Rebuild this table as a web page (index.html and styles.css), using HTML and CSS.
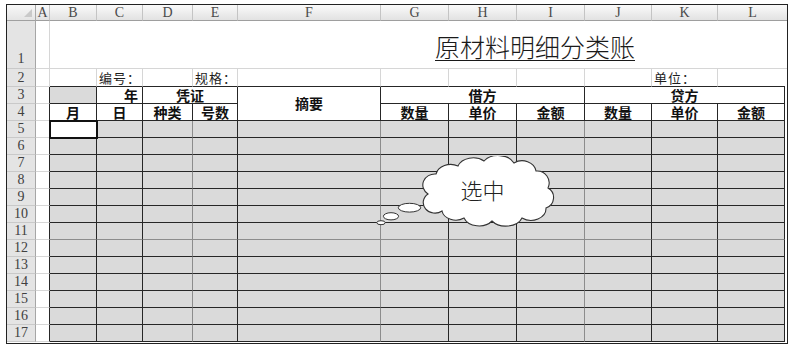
FILE: index.html
```html
<!DOCTYPE html>
<html lang="zh-CN">
<head>
<meta charset="utf-8">
<title>原材料明细分类账</title>
<link rel="stylesheet" href="styles.css">
</head>
<body>
<div class="sheet">
<table class="grid">
<colgroup>
<col class="w-rh"><col class="w-a"><col class="w-b"><col class="w-c"><col class="w-d"><col class="w-e"><col class="w-f"><col class="w-g"><col class="w-h"><col class="w-i"><col class="w-j"><col class="w-k"><col class="w-l"><col class="w-x">
</colgroup>
<tr class="r-head">
<th class="corner"><span class="tri"></span></th>
<th class="ch">A</th><th class="ch">B</th><th class="ch">C</th><th class="ch">D</th><th class="ch">E</th><th class="ch">F</th><th class="ch">G</th><th class="ch">H</th><th class="ch">I</th><th class="ch">J</th><th class="ch">K</th><th class="ch last" colspan="2">L</th>
</tr>
<tr class="r-1">
<th class="rh bottom">1</th><td class="ca"></td>
<td class="title-cell" colspan="12"><span class="title">原材料明细分类账</span></td>
</tr>
<tr class="r-2">
<th class="rh">2</th><td class="ca"></td>
<td class="top"></td><td class="top lbl">编号：</td><td class="top"></td><td class="top lbl">规格：</td><td class="top"></td><td class="top"></td><td class="top"></td><td class="top"></td><td class="top"></td><td class="top lbl">单位：</td><td class="top noright"></td><td class="x"></td>
</tr>
<tr class="r-3">
<th class="rh">3</th><td class="ca edge"></td>
<td class="hd fill"></td><td class="hd right">年</td><td class="hd" colspan="2">凭证</td><td class="hd" rowspan="2">摘要</td><td class="hd" colspan="3">借方</td><td class="hd" colspan="3">贷方</td><td class="x"></td>
</tr>
<tr class="r-4">
<th class="rh">4</th><td class="ca edge"></td>
<td class="hd">月</td><td class="hd">日</td><td class="hd">种类</td><td class="hd">号数</td><td class="hd">数量</td><td class="hd">单价</td><td class="hd">金额</td><td class="hd">数量</td><td class="hd">单价</td><td class="hd">金额</td><td class="x"></td>
</tr>
<tr class="r-d"><th class="rh">5</th><td class="ca edge"></td><td class="dc active"></td><td class="dc"></td><td class="dc soft"></td><td class="dc"></td><td class="dc soft"></td><td class="dc"></td><td class="dc"></td><td class="dc soft"></td><td class="dc"></td><td class="dc"></td><td class="dc"></td><td class="x"></td></tr>
<tr class="r-d"><th class="rh">6</th><td class="ca edge"></td><td class="dc"></td><td class="dc"></td><td class="dc soft"></td><td class="dc"></td><td class="dc soft"></td><td class="dc"></td><td class="dc"></td><td class="dc soft"></td><td class="dc"></td><td class="dc"></td><td class="dc"></td><td class="x"></td></tr>
<tr class="r-d"><th class="rh">7</th><td class="ca edge"></td><td class="dc"></td><td class="dc"></td><td class="dc soft"></td><td class="dc"></td><td class="dc soft"></td><td class="dc"></td><td class="dc"></td><td class="dc soft"></td><td class="dc"></td><td class="dc"></td><td class="dc"></td><td class="x"></td></tr>
<tr class="r-d"><th class="rh">8</th><td class="ca edge"></td><td class="dc"></td><td class="dc"></td><td class="dc soft"></td><td class="dc"></td><td class="dc soft"></td><td class="dc"></td><td class="dc"></td><td class="dc soft"></td><td class="dc"></td><td class="dc"></td><td class="dc"></td><td class="x"></td></tr>
<tr class="r-d"><th class="rh">9</th><td class="ca edge"></td><td class="dc"></td><td class="dc"></td><td class="dc soft"></td><td class="dc"></td><td class="dc soft"></td><td class="dc"></td><td class="dc"></td><td class="dc soft"></td><td class="dc"></td><td class="dc"></td><td class="dc"></td><td class="x"></td></tr>
<tr class="r-d"><th class="rh">10</th><td class="ca edge"></td><td class="dc"></td><td class="dc"></td><td class="dc soft"></td><td class="dc"></td><td class="dc soft"></td><td class="dc"></td><td class="dc"></td><td class="dc soft"></td><td class="dc"></td><td class="dc"></td><td class="dc"></td><td class="x"></td></tr>
<tr class="r-d light"><th class="rh">11</th><td class="ca edge"></td><td class="dc"></td><td class="dc"></td><td class="dc soft"></td><td class="dc"></td><td class="dc soft"></td><td class="dc"></td><td class="dc"></td><td class="dc soft"></td><td class="dc"></td><td class="dc"></td><td class="dc"></td><td class="x"></td></tr>
<tr class="r-d"><th class="rh">12</th><td class="ca edge"></td><td class="dc"></td><td class="dc"></td><td class="dc soft"></td><td class="dc"></td><td class="dc soft"></td><td class="dc"></td><td class="dc"></td><td class="dc soft"></td><td class="dc"></td><td class="dc"></td><td class="dc"></td><td class="x"></td></tr>
<tr class="r-d"><th class="rh">13</th><td class="ca edge"></td><td class="dc"></td><td class="dc"></td><td class="dc soft"></td><td class="dc"></td><td class="dc soft"></td><td class="dc"></td><td class="dc"></td><td class="dc soft"></td><td class="dc"></td><td class="dc"></td><td class="dc"></td><td class="x"></td></tr>
<tr class="r-d"><th class="rh">14</th><td class="ca edge"></td><td class="dc"></td><td class="dc"></td><td class="dc soft"></td><td class="dc"></td><td class="dc soft"></td><td class="dc"></td><td class="dc"></td><td class="dc soft"></td><td class="dc"></td><td class="dc"></td><td class="dc"></td><td class="x"></td></tr>
<tr class="r-d"><th class="rh">15</th><td class="ca edge"></td><td class="dc"></td><td class="dc"></td><td class="dc soft"></td><td class="dc"></td><td class="dc soft"></td><td class="dc"></td><td class="dc"></td><td class="dc soft"></td><td class="dc"></td><td class="dc"></td><td class="dc"></td><td class="x"></td></tr>
<tr class="r-d"><th class="rh">16</th><td class="ca edge"></td><td class="dc"></td><td class="dc"></td><td class="dc soft"></td><td class="dc"></td><td class="dc soft"></td><td class="dc"></td><td class="dc"></td><td class="dc soft"></td><td class="dc"></td><td class="dc"></td><td class="dc"></td><td class="x"></td></tr>
<tr class="r-d"><th class="rh">17</th><td class="ca edge"></td><td class="dc"></td><td class="dc"></td><td class="dc soft"></td><td class="dc"></td><td class="dc soft"></td><td class="dc"></td><td class="dc"></td><td class="dc soft"></td><td class="dc"></td><td class="dc"></td><td class="dc"></td><td class="x"></td></tr>
</table>
</div>

<svg class="callout" width="182" height="72" viewBox="0 0 182 72" xmlns="http://www.w3.org/2000/svg">
  <ellipse cx="7" cy="66.7" rx="4.2" ry="2" fill="#fff" stroke="#333" stroke-width="1"/>
  <ellipse cx="17" cy="60.3" rx="7.6" ry="3.6" fill="#fff" stroke="#333" stroke-width="1"/>
  <ellipse cx="35.5" cy="51.7" rx="11.2" ry="4.4" fill="#fff" stroke="#333" stroke-width="1"/>
  <path transform="translate(48,2)" fill="#fff" stroke="#333" stroke-width="1.1"
    d="M 6,36 A 12,11 0 0 1 14,16 A 15,12 0 0 1 36,8 A 16,12 0 0 1 62,3 A 17,12 0 0 1 92,5 A 14,12 0 0 1 114,13 A 12,12 0 0 1 126,30 A 11,11 0 0 1 124,50 A 15,12 0 0 1 100,60 A 17,12 0 0 1 70,63 A 16,12 0 0 1 42,60 A 14,11 0 0 1 20,53 A 10,9 0 0 1 6,36 Z"/>
  <text class="callout-text" x="108.5" y="43" text-anchor="middle">选中</text>
</svg>
</body>
</html>
```

FILE: styles.css
```css
* { box-sizing: border-box; }

html, body {
  margin: 0;
  padding: 0;
  background: #fff;
}

body {
  position: relative;
  width: 800px;
  height: 350px;
  overflow: hidden;
  font-family: "Noto Sans CJK SC", "Noto Sans", sans-serif;
  color: #1e1e1e;
}

.sheet {
  display: inline-block;
  margin: 4px 0 0 6px;
  border: 1px solid #222;
  padding-bottom: 1px;
  vertical-align: top;
}

.grid {
  border-collapse: separate;
  border-spacing: 0;
  table-layout: fixed;
  width: 780px;
}

.w-rh { width: 29px; }
.w-a { width: 14px; }
.w-b { width: 47px; }
.w-c { width: 46px; }
.w-d { width: 50px; }
.w-e { width: 45px; }
.w-f { width: 143px; }
.w-g { width: 68px; }
.w-h { width: 68px; }
.w-i { width: 68px; }
.w-j { width: 67px; }
.w-k { width: 66px; }
.w-l { width: 67px; }
.w-x { width: 2px; }

.grid th, .grid td {
  padding: 0;
  border-right: 1px solid #d6d6d6;
  border-bottom: 1px solid #d6d6d6;
  white-space: nowrap;
  overflow: visible;
  font-weight: normal;
  line-height: 14px;
}

/* heights */
.r-head th { height: 16px; }
.r-1 th, .r-1 td { height: 48px; }
.r-2 th, .r-2 td { height: 18px; }
.r-3 th, .r-3 td { height: 17px; }
.r-4 th, .r-4 td { height: 17px; }
.r-d th, .r-d td { height: 17px; }

/* column headers */
.corner {
  background: linear-gradient(#f8f8f8, #e4e4e4);
  border-right-color: #a8a8a8 !important;
  border-bottom-color: #a0a0a0 !important;
  text-align: right;
  vertical-align: bottom;
}
.tri {
  display: inline-block;
  width: 0;
  height: 0;
  border-left: 8px solid transparent;
  border-bottom: 8px solid #c9c9c9;
  margin: 0 3px 3px 0;
  vertical-align: bottom;
}
.ch {
  background: linear-gradient(#fafafa, #e2e2e2);
  border-right-color: #c4c4c4 !important;
  border-bottom-color: #9e9e9e !important;
  font-family: "Liberation Serif", "DejaVu Serif", serif;
  font-size: 14px;
  color: #4a4a4a;
  text-align: center;
  vertical-align: middle;
}
.ch.last { border-right: none; }

/* row headers */
.rh {
  background: #e4e4e4;
  border-right-color: #a6a6a6 !important;
  border-bottom-color: #c9c9c9 !important;
  font-family: "Liberation Serif", "DejaVu Serif", serif;
  font-size: 14px;
  color: #404040;
  text-align: center;
  vertical-align: middle;
}
.rh.bottom { vertical-align: bottom; padding-bottom: 2px; }

/* column A */
.ca { background: #fff; }
.ca.edge { border-right-color: #262626; }

/* title */
.title-cell {
  border-right: none !important;
  vertical-align: bottom;
  padding: 0 0 9px 385px !important;
}
.title {
  font-size: 25px;
  line-height: 25px;
  font-weight: 300;
  color: #1a1a1a;
  text-decoration: underline;
  text-decoration-thickness: 1px;
  text-underline-offset: 3px;
}

/* row 2 */
.r-2 .top { border-bottom-color: #262626; }
.r-2 .noright { border-right: none; }
.lbl {
  font-size: 13px;
  color: #1e1e1e;
  padding-left: 2px !important;
  letter-spacing: 1px;
  vertical-align: middle;
}
.x { border-right: none !important; border-bottom: none !important; }

/* header block rows 3-4 */
.hd {
  border-right-color: #262626 !important;
  border-bottom-color: #262626 !important;
  background: #fff;
  font-size: 14px;
  line-height: 15px !important;
  font-weight: 700 !important;
  color: #111;
  text-align: center;
  vertical-align: middle;
}
.hd.right { text-align: right; padding-right: 4px; }
.hd.fill { background: #dadada; }

/* data rows */
.dc {
  background: #dadada;
  border-right-color: #262626 !important;
  border-bottom-color: #262626 !important;
}
.dc.soft { border-right-color: #8c8c8c !important; }
.r-d.light .dc { border-bottom-color: #8c8c8c !important; }
.dc.active {
  background: #fff;
  outline: 2px solid #111;
  outline-offset: -1px;
}

/* callout */
.callout {
  position: absolute;
  left: 374px;
  top: 156px;
}
.callout-text {
  font-family: "Noto Sans CJK SC", sans-serif;
  font-size: 22px;
  font-weight: 300;
  fill: #222;
}
```
